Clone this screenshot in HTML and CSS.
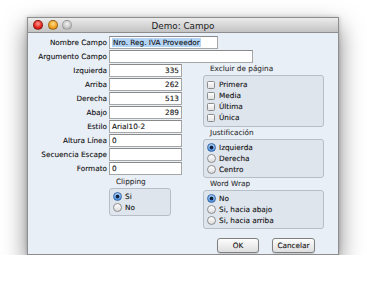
FILE: index.html
```html
<!DOCTYPE html>
<html lang="es">
<head>
    <meta charset="UTF-8">
    <title>Demo: Campo</title>
    <link rel="stylesheet" href="styles.css">
</head>
<body>
    <div class="window">
        <div class="titlebar">
            <div class="lights">
                <span class="light red"></span>
                <span class="light orange"></span>
                <span class="light gray"></span>
            </div>
            <div class="title">Demo: Campo</div>
        </div>
        <div class="content">
            <div class="row"><span class="lbl">Nombre Campo</span><div class="field w-name"><span class="sel">Nro. Reg. IVA Proveedor</span></div></div>
            <div class="row"><span class="lbl">Argumento Campo</span><div class="field w-arg"></div></div>
            <div class="columns">
                <div class="left">
                    <div class="row"><span class="lbl">Izquierda</span><div class="field num">335</div></div>
                    <div class="row"><span class="lbl">Arriba</span><div class="field num">262</div></div>
                    <div class="row"><span class="lbl">Derecha</span><div class="field num">513</div></div>
                    <div class="row"><span class="lbl">Abajo</span><div class="field num">289</div></div>
                    <div class="row"><span class="lbl">Estilo</span><div class="field">Arial10-2</div></div>
                    <div class="row"><span class="lbl">Altura Línea</span><div class="field">0</div></div>
                    <div class="row"><span class="lbl">Secuencia Escape</span><div class="field"></div></div>
                    <div class="row"><span class="lbl">Formato</span><div class="field">0</div></div>
                    <div class="group clipping">
                        <div class="group-title">Clipping</div>
                        <div class="box">
                            <div class="opt"><span class="radio on"></span>Si</div>
                            <div class="opt"><span class="radio"></span>No</div>
                        </div>
                    </div>
                </div>
                <div class="right">
                    <div class="group">
                        <div class="group-title">Excluir de página</div>
                        <div class="box tall">
                            <div class="opt"><span class="check"></span>Primera</div>
                            <div class="opt"><span class="check"></span>Media</div>
                            <div class="opt"><span class="check"></span>Última</div>
                            <div class="opt"><span class="check"></span>Única</div>
                        </div>
                    </div>
                    <div class="group">
                        <div class="group-title">Justificación</div>
                        <div class="box">
                            <div class="opt"><span class="radio on"></span>Izquierda</div>
                            <div class="opt"><span class="radio"></span>Derecha</div>
                            <div class="opt"><span class="radio"></span>Centro</div>
                        </div>
                    </div>
                    <div class="group">
                        <div class="group-title">Word Wrap</div>
                        <div class="box">
                            <div class="opt"><span class="radio on"></span>No</div>
                            <div class="opt"><span class="radio"></span>Si, hacia abajo</div>
                            <div class="opt"><span class="radio"></span>Si, hacia arriba</div>
                        </div>
                    </div>
                    <div class="buttons">
                        <button class="btn ok">OK</button>
                        <button class="btn cancel">Cancelar</button>
                    </div>
                </div>
            </div>
        </div>
    </div>
</body>
</html>
```

FILE: styles.css
```css
body {
    margin: 0;
    padding: 17px 0 0 27px;
    background: #fff;
    font-family: "DejaVu Sans", Verdana, sans-serif;
    font-size: 7.3px;
    color: #111;
    -webkit-text-stroke: 0.1px #111;
}
.window {
    width: 310px;
    height: 236px;
    border: 1px solid #8d8d8d;
    background: #e9eff7;
    box-shadow: 0 10px 22px rgba(0, 0, 0, 0.5), 0 0 4px rgba(0, 0, 0, 0.2);
    display: flex;
    flex-direction: column;
}
.titlebar {
    height: 14px;
    border-bottom: 1px solid #8e8e8e;
    background: linear-gradient(#ebebeb, #c3c3c3);
    display: grid;
    grid-template-columns: 1fr auto 1fr;
    align-items: center;
}
.lights {
    display: flex;
    gap: 4.7px;
    padding-left: 5px;
}
.light {
    width: 10px;
    height: 10px;
    border-radius: 50%;
    box-sizing: border-box;
    border: 1px solid rgba(0, 0, 0, 0.35);
}
.red { background: radial-gradient(circle at 50% 35%, #ff9a90, #e3221a 60%, #a0120c); }
.orange { background: radial-gradient(circle at 50% 35%, #ffdc8a, #f0a020 60%, #b06a08); }
.gray { background: radial-gradient(circle at 50% 35%, #f2f2f2, #c6c6c6 60%, #a0a0a0); border-color: rgba(0, 0, 0, 0.2); }
.title {
    font-size: 8.8px;
    color: #222;
    -webkit-text-stroke: 0;
    padding-top: 1px;
}
.content {
    padding-top: 3px;
}
.row {
    display: flex;
    height: 14px;
}
.lbl {
    width: 79px;
    text-align: right;
    line-height: 13px;
    margin-right: 2px;
}
.field {
    width: 73px;
    height: 13px;
    box-sizing: border-box;
    background: #fff;
    border: 1px solid #a6a6a6;
    border-top-color: #8a8a8a;
    line-height: 11px;
    padding: 0 2px;
    white-space: nowrap;
}
.w-name { width: 109px; }
.w-arg { width: 144px; }
.num { text-align: right; }
.sel {
    background: #b4d4f6;
    padding: 0 1px;
}
.columns {
    display: flex;
}
.left {
    width: 175px;
}
.right {
    width: 121px;
    margin-top: -1px;
}
.group-title {
    line-height: 12px;
    padding-left: 7px;
    color: #333;
    -webkit-text-stroke-color: #333;
}
.box {
    box-sizing: border-box;
    border: 1px solid #b7bec8;
    border-radius: 3px;
    background: #dfe5ed;
    padding: 2px 0 2px 3px;
}
.box.tall {
    padding: 3px 0 3px 3px;
}
.clipping {
    margin-left: 81px;
    width: 62px;
}
.opt {
    display: flex;
    align-items: center;
    height: 11px;
    gap: 3px;
}
.check {
    width: 8px;
    height: 8px;
    box-sizing: border-box;
    border: 1px solid #8c8c8c;
    border-radius: 1.5px;
    background: linear-gradient(#fefefe, #e2e2e2);
    margin-right: 1px;
}
.radio {
    width: 9px;
    height: 9px;
    box-sizing: border-box;
    border-radius: 50%;
    border: 1px solid #8c8c8c;
    background: linear-gradient(#fefefe, #dcdcdc);
}
.radio.on {
    border-color: #3a68a8;
    background: radial-gradient(circle, #13233d 0 1.6px, transparent 2.2px), linear-gradient(#a8cdf5, #4a8ee0);
}
.buttons {
    display: flex;
    justify-content: flex-end;
    gap: 13px;
    margin-top: 9px;
    padding-right: 9px;
}
.btn {
    height: 15px;
    box-sizing: border-box;
    border: 1px solid #7f7f7f;
    border-radius: 3px;
    background: linear-gradient(#fdfdfd, #dedede);
    box-shadow: 0 1px 1px rgba(0, 0, 0, 0.15);
    font-family: "DejaVu Sans", Verdana, sans-serif;
    font-size: 7.3px;
    color: #111;
    -webkit-text-stroke: 0.1px #111;
    padding: 0;
}
.ok { width: 42px; }
.cancel { width: 43px; }
```
